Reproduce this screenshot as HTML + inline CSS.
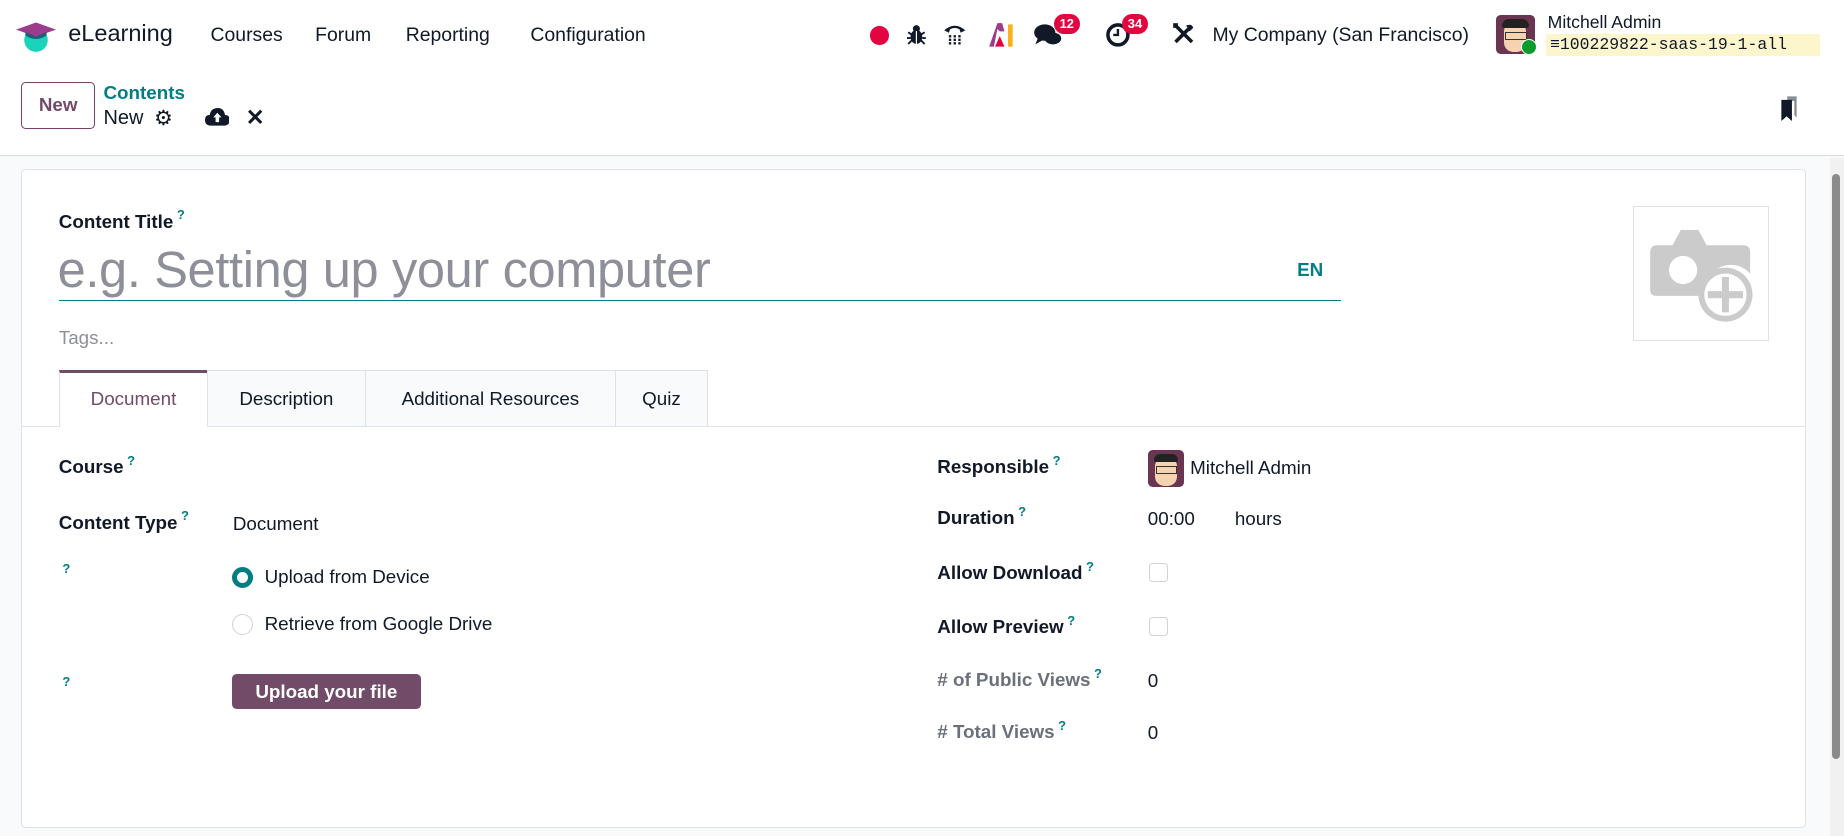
<!DOCTYPE html>
<html><head><meta charset="utf-8"><style>
html,body{margin:0;padding:0;background:#f9fafb;overflow:hidden}
#w{zoom:1.17602;width:1568px;height:711px;position:relative;font-family:"Liberation Sans",sans-serif;color:#111827;font-size:15px}
.a{position:absolute;white-space:nowrap}
.b{font-weight:bold}
.q{color:#017e84;font-size:11px;font-weight:bold;position:relative;top:-7px;margin-left:3px}
.qa{position:absolute;color:#017e84;font-size:11px;font-weight:bold}
.badge{position:absolute;background:#e3053f;color:#fff;font-size:11px;font-weight:bold;border-radius:9px;padding:1px 5px;line-height:15px}
.tab{position:absolute;top:315px;height:47px;background:#f9fafb;border:1px solid #dee2e6;border-bottom:none;box-sizing:border-box;text-align:center;line-height:47px;font-size:16px}
.cb{position:absolute;width:16px;height:16px;border:1px solid #ced4da;border-radius:3px;box-sizing:border-box;background:#fff}
</style></head><body><div id="w">
<div class="a" style="left:0;top:0;width:1568px;height:132px;background:#fff;border-bottom:1px solid #d8dadd"></div>
<svg class="a" style="left:14px;top:16px" width="34" height="30" viewBox="0 0 34 30"><ellipse cx="17" cy="18" rx="10" ry="10" fill="#1ad3bb"/><polygon points="0,9 17,3 34,9 17,15" fill="#9b3c8c"/><path d="M8,11 L17,15 L26,11 L26,14 Q17,20 8,14Z" fill="#1b5f7b"/></svg>
<div class="a" style="left:58px;top:17px;font-size:20px">eLearning</div>
<div class="a" style="left:179px;top:20px;font-size:16.5px">Courses</div>
<div class="a" style="left:268px;top:20px;font-size:16.5px">Forum</div>
<div class="a" style="left:345px;top:20px;font-size:16.5px">Reporting</div>
<div class="a" style="left:451px;top:20px;font-size:16.5px">Configuration</div>
<div class="a" style="left:740px;top:22px;width:16px;height:16px;border-radius:50%;background:#e3053f"></div>
<svg class="a" style="left:771px;top:20px" width="16" height="18" viewBox="0 0 16 18"><ellipse cx="8" cy="11" rx="5" ry="6" fill="#111827"/><circle cx="8" cy="4" r="3" fill="#111827"/><path d="M1,7 L4,9 M15,7 L12,9 M0,12 H3 M13,12 H16 M1,17 L4,14 M15,17 L12,14" stroke="#111827" stroke-width="1.6"/><path d="M8,6 V17" stroke="#fff" stroke-width="1"/></svg>
<svg class="a" style="left:802px;top:18px" width="20" height="22" viewBox="0 0 20 22"><path d="M1,8 Q10,0 19,8 L15,10 L14,7 Q10,5 6,7 L5,10Z" fill="#111827"/><g fill="#111827"><rect x="5" y="12" width="2" height="2"/><rect x="9" y="12" width="2" height="2"/><rect x="13" y="12" width="2" height="2"/><rect x="5" y="15" width="2" height="2"/><rect x="9" y="15" width="2" height="2"/><rect x="13" y="15" width="2" height="2"/><rect x="5" y="18" width="2" height="2"/><rect x="9" y="18" width="2" height="2"/><rect x="13" y="18" width="2" height="2"/></g></svg>
<svg class="a" style="left:840px;top:19px" width="24" height="22" viewBox="0 0 24 22"><path d="M1,21 L8,1 L12,1 L14,8 L10,8 L8,6 L5,21Z" fill="#9b3c8c"/><path d="M6,21 L10,12 L14,21Z" fill="#e3053f"/><rect x="17" y="2" width="4" height="19" fill="#f9b122"/></svg>
<svg class="a" style="left:878px;top:19px" width="26" height="22" viewBox="0 0 26 22"><ellipse cx="10" cy="9" rx="9" ry="7" fill="#111827"/><path d="M4,14 L2,19 L9,15Z" fill="#111827"/><ellipse cx="17" cy="14" rx="7" ry="5" fill="#111827"/></svg>
<div class="badge" style="left:896px;top:12px">12</div>
<svg class="a" style="left:940px;top:19px" width="22" height="22" viewBox="0 0 22 22"><circle cx="11" cy="11" r="8.5" fill="none" stroke="#111827" stroke-width="3"/><path d="M11,6 V11 H7" stroke="#111827" stroke-width="2" fill="none"/></svg>
<div class="badge" style="left:954px;top:12px">34</div>
<svg class="a" style="left:997px;top:19px" width="20" height="20" viewBox="0 0 20 20"><path d="M3,17 L14,6" stroke="#111827" stroke-width="3"/><path d="M12,3 Q17,1 18,5 L15,8Z" fill="#111827"/><path d="M3,3 L17,17" stroke="#111827" stroke-width="3"/><rect x="1" y="1" width="4" height="4" fill="#111827"/></svg>
<div class="a" style="left:1031px;top:20px;font-size:16.5px">My Company (San Francisco)</div>
<div class="a" style="left:1272px;top:13px;width:33px;height:33px;border-radius:4px;background:#6b3552;overflow:hidden"><div style="position:absolute;left:7px;top:6px;width:19px;height:25px;background:#f5d3b0;border-radius:8px"></div><div style="position:absolute;left:5px;top:3px;width:23px;height:8px;background:#222;border-radius:6px 6px 2px 2px"></div><div style="position:absolute;left:8px;top:14px;width:17px;height:5px;border:1px solid #333"></div></div>
<div class="a" style="left:1293px;top:33px;width:12px;height:12px;border-radius:50%;background:#0a9d2e;border:1px solid #fff"></div>
<div class="a" style="left:1316px;top:10px;font-size:15px">Mitchell Admin</div>
<div class="a" style="left:1315px;top:29px;width:233px;height:19px;background:#fbf6cc"></div>
<div class="a" style="left:1318px;top:30px;font-family:'Liberation Mono',monospace;font-size:14px">≡100229822-saas-19-1-all</div>
<div class="a" style="left:18px;top:70px;width:63px;height:40px;border:1px solid #7c3f69;border-radius:4px;box-sizing:border-box;text-align:center;line-height:38px;color:#714b67;font-weight:bold;font-size:16px">New</div>
<div class="a" style="left:88px;top:70px;color:#017e84;font-weight:bold;font-size:16px">Contents</div>
<div class="a" style="left:88px;top:91px;font-size:17px">New</div>
<div class="a" style="left:131px;top:89px;font-size:18px">⚙</div>
<svg class="a" style="left:174px;top:92px" width="21" height="16" viewBox="0 0 21 16"><path d="M5,15 Q0,15 0,10 Q0,6 4,6 Q5,0 11,0 Q16,0 17,6 Q21,6 21,10 Q21,15 16,15Z" fill="#111827"/><path d="M10.5,4 L14,8 H12 V12 H9 V8 H7Z" fill="#fff"/></svg>
<div class="a" style="left:209px;top:89px;font-size:19px;font-weight:bold">✕</div>
<svg class="a" style="left:1513px;top:80px" width="20" height="24" viewBox="0 0 20 24"><path d="M7,2 H15 V20 L13,18 V6 H7Z" fill="#8a8d93"/><path d="M2,5 H11 V23 L6.5,19 L2,23Z" fill="#111827"/></svg>
<div class="a" style="left:1556px;top:134px;width:12px;height:577px;background:#f1f1f1"></div>
<div class="a" style="left:1558px;top:148px;width:7px;height:497px;background:#8b8b8b;border-radius:4px"></div>
<div class="a" style="left:18px;top:144px;width:1518px;height:560px;background:#fff;border:1px solid #dee2e6;border-radius:4px;box-sizing:border-box"></div>
<div class="a b" style="left:50px;top:179px;font-size:16px">Content Title<span class="q">?</span></div>
<div class="a" style="left:49px;top:204px;font-size:43px;color:#8e8f99;letter-spacing:-0.3px">e.g. Setting up your computer</div>
<div class="a b" style="left:1103px;top:220px;color:#017e84;font-size:16px">EN</div>
<div class="a" style="left:50px;top:255px;width:1090px;height:1px;background:#017e84"></div>
<div class="a" style="left:50px;top:278px;color:#8e8f99;font-size:16px">Tags...</div>
<div class="a" style="left:1389px;top:175px;width:115px;height:115px;border:1px solid #dee2e6;box-sizing:border-box"></div>
<svg class="a" style="left:1402px;top:196px" width="90" height="80" viewBox="0 0 90 80"><path d="M27,0 H42 L49,13 H80 Q86,13 86,19 V37 A22,22 0 0 0 48,56 L48,56 H6 Q1,56 1,51 V19 Q1,13 7,13 H20Z" fill="#cbcbcb"/><circle cx="29" cy="34" r="12" fill="#fff"/><circle cx="65" cy="55" r="23" fill="#cbcbcb"/><circle cx="65" cy="55" r="18" fill="#fff"/><rect x="62" y="40" width="6" height="30" fill="#cbcbcb"/><rect x="50" y="52" width="30" height="6" fill="#cbcbcb"/></svg>
<div class="a" style="left:19px;top:362px;width:1516px;height:1px;background:#dee2e6"></div>
<div class="tab" style="left:50px;width:127px;background:#fff;border-top:3px solid #714b67;color:#714b67;height:48px;line-height:45px">Document</div>
<div class="tab" style="left:176px;width:135px">Description</div>
<div class="tab" style="left:310px;width:214px">Additional Resources</div>
<div class="tab" style="left:523px;width:79px">Quiz</div>
<div class="a b" style="left:50px;top:388px;font-size:16px">Course<span class="q">?</span></div>
<div class="a b" style="left:50px;top:435px;font-size:16px">Content Type<span class="q">?</span></div>
<div class="a" style="left:198px;top:436px;font-size:16px">Document</div>
<div class="qa" style="left:53px;top:477px">?</div>
<div class="a" style="left:197px;top:482px;width:18px;height:18px;border-radius:50%;border:5px solid #017e84;box-sizing:border-box"></div>
<div class="a" style="left:225px;top:481px;font-size:16px">Upload from Device</div>
<div class="a" style="left:197px;top:522px;width:18px;height:18px;border-radius:50%;border:1px solid #ced4da;box-sizing:border-box"></div>
<div class="a" style="left:225px;top:521px;font-size:16px">Retrieve from Google Drive</div>
<div class="qa" style="left:53px;top:573px">?</div>
<div class="a b" style="left:197px;top:573px;width:161px;height:30px;background:#714b67;border-radius:4px;color:#fff;text-align:center;line-height:30px;font-size:16px">Upload your file</div>
<div class="a b" style="left:797px;top:388px;font-size:16px">Responsible<span class="q">?</span></div>
<div class="a" style="left:976px;top:383px;width:31px;height:31px;border-radius:4px;background:#6b3552;overflow:hidden"><div style="position:absolute;left:6px;top:6px;width:19px;height:24px;background:#f5d3b0;border-radius:8px"></div><div style="position:absolute;left:5px;top:3px;width:21px;height:7px;background:#222;border-radius:6px 6px 2px 2px"></div><div style="position:absolute;left:7px;top:13px;width:16px;height:5px;border:1px solid #333"></div></div>
<div class="a" style="left:1012px;top:389px;font-size:16px">Mitchell Admin</div>
<div class="a b" style="left:797px;top:431px;font-size:16px">Duration<span class="q">?</span></div>
<div class="a" style="left:976px;top:432px;font-size:16px">00:00</div>
<div class="a" style="left:1050px;top:432px;font-size:16px">hours</div>
<div class="a b" style="left:797px;top:478px;font-size:16px">Allow Download<span class="q">?</span></div>
<div class="cb" style="left:977px;top:479px"></div>
<div class="a b" style="left:797px;top:524px;font-size:16px">Allow Preview<span class="q">?</span></div>
<div class="cb" style="left:977px;top:525px"></div>
<div class="a b" style="left:797px;top:569px;font-size:16px;color:#6c707a"># of Public Views<span class="q">?</span></div>
<div class="a" style="left:976px;top:570px;font-size:16px">0</div>
<div class="a b" style="left:797px;top:613px;font-size:16px;color:#6c707a"># Total Views<span class="q">?</span></div>
<div class="a" style="left:976px;top:614px;font-size:16px">0</div>
</div></body></html>
